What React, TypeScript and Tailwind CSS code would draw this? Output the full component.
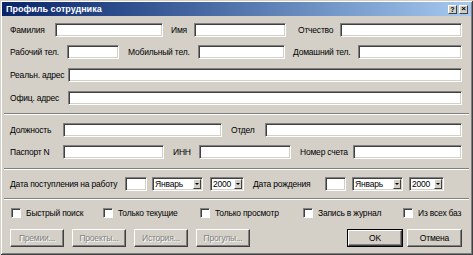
import React from "react";

const FONT = { fontFamily: '"Liberation Sans", Arial, sans-serif' };

// sunken edit box
const Field = ({ w }: { w: string }) => (
  <div
    className={`h-[14px] shrink-0 bg-white border border-t-[#808080] border-l-[#808080] border-b-white border-r-white shadow-[inset_1px_1px_0_#404040,inset_-1px_-1px_0_#d4d0c8] ${w}`}
  />
);

const Label = ({ w, text, ml = "" }: { w: string; text: string; ml?: string }) => (
  <span className={`shrink-0 whitespace-nowrap text-[8.5px] tracking-[-0.2px] leading-none text-black ${w} ${ml}`}>
    {text}
  </span>
);

const Combo = ({ w, value, ml }: { w: string; value: string; ml: string }) => (
  <div
    className={`h-[14px] shrink-0 flex items-center bg-white border border-t-[#808080] border-l-[#808080] border-b-white border-r-white shadow-[inset_1px_1px_0_#404040,inset_-1px_-1px_0_#d4d0c8] pl-[2px] pr-[1px] ${w} ${ml}`}
  >
    <span className="flex-1 text-[8.5px] tracking-[-0.2px] leading-none text-black">{value}</span>
    <div className="w-[8px] h-[10px] flex items-center justify-center bg-[#d4d0c8] border border-t-white border-l-white border-b-[#404040] border-r-[#404040]">
      <div className="w-0 h-0 border-l-[2px] border-r-[2px] border-t-[2px] border-l-transparent border-r-transparent border-t-black" />
    </div>
  </div>
);

const Separator = () => (
  <div className="mx-[4px] h-[2px] border-t border-t-[#808080] border-b border-b-white" />
);

const Check = ({ label, w }: { label: string; w: string }) => (
  <div className={`flex items-center shrink-0 ${w}`}>
    <div className="w-[10px] h-[10px] bg-white border border-t-[#808080] border-l-[#808080] border-b-white border-r-white shadow-[inset_1px_1px_0_#404040]" />
    <span className="ml-[5px] text-[8.5px] tracking-[-0.2px] leading-none text-black whitespace-nowrap">{label}</span>
  </div>
);

const Button = ({ label, disabled, primary, w }: { label: string; disabled?: boolean; primary?: boolean; w: string }) => (
  <div className={`h-[18px] shrink-0 ${w} ${primary ? "border border-black" : ""}`}>
    <div className="h-full w-full flex items-center justify-center bg-[#d4d0c8] border border-t-white border-l-white border-b-[#404040] border-r-[#404040] shadow-[inset_-1px_-1px_0_#808080]">
      <span
        className={`text-[8.5px] tracking-[-0.2px] leading-none whitespace-nowrap ${disabled ? "text-[#808080] [text-shadow:1px_1px_0_#ffffff]" : "text-black"}`}
      >
        {label}
      </span>
    </div>
  </div>
);

export default function App() {
  return (
    <div
      style={FONT}
      className="w-[473px] h-[255px] flex flex-col bg-[#d4d0c8] shadow-[inset_1px_1px_0_#d4d0c8,inset_-1px_-1px_0_#404040,inset_2px_2px_0_#ffffff,inset_-2px_-2px_0_#808080] overflow-hidden"
    >
      {/* title bar */}
      <div className="mt-[2px] mx-[2px] h-[14px] flex items-center bg-gradient-to-r from-[#0a246a] to-[#a6caf0] pl-[4px] pr-[3px]">
        <span className="flex-1 text-[9px] font-bold text-white leading-none">Профиль сотрудника</span>
        <div className="w-[9px] h-[9px] flex items-center justify-center bg-[#d4d0c8] border border-t-white border-l-white border-b-[#404040] border-r-[#404040]">
          <span className="text-[7px] font-bold leading-none text-black">?</span>
        </div>
        <div className="ml-[2px] w-[9px] h-[9px] flex items-center justify-center bg-[#d4d0c8] border border-t-white border-l-white border-b-[#404040] border-r-[#404040]">
          <span className="text-[8px] font-bold leading-none text-black">×</span>
        </div>
      </div>

      {/* names */}
      <div className="mt-[7px] h-[14px] flex items-center pl-[10px]">
        <Label w="w-[45px]" text="Фамилия" />
        <Field w="w-[108px]" />
        <Label w="w-[23px]" ml="ml-[8px]" text="Имя" />
        <Field w="w-[92px]" />
        <Label w="w-[42px]" ml="ml-[12px]" text="Отчество" />
        <Field w="w-[122px]" />
      </div>

      {/* phones */}
      <div className="mt-[8px] h-[14px] flex items-center pl-[10px]">
        <Label w="w-[57px]" text="Рабочий тел." />
        <Field w="w-[52px]" />
        <Label w="w-[70px]" ml="ml-[9px]" text="Мобильный тел." />
        <Field w="w-[87px]" />
        <Label w="w-[65px]" ml="ml-[8px]" text="Домашний тел." />
        <Field w="w-[104px]" />
      </div>

      {/* addresses */}
      <div className="mt-[9px] h-[14px] flex items-center pl-[10px]">
        <Label w="w-[58px]" text="Реальн. адрес" />
        <Field w="w-[394px]" />
      </div>
      <div className="mt-[9px] h-[14px] flex items-center pl-[10px]">
        <Label w="w-[58px]" text="Офиц. адрес" />
        <Field w="w-[394px]" />
      </div>

      <div className="mt-[8px]">
        <Separator />
      </div>

      {/* job */}
      <div className="mt-[8px] h-[14px] flex items-center pl-[10px]">
        <Label w="w-[53px]" text="Должность" />
        <Field w="w-[159px]" />
        <Label w="w-[34px]" ml="ml-[9px]" text="Отдел" />
        <Field w="w-[197px]" />
      </div>
      <div className="mt-[8px] h-[14px] flex items-center pl-[10px]">
        <Label w="w-[53px]" text="Паспорт N" />
        <Field w="w-[101px]" />
        <Label w="w-[26px]" ml="ml-[9px]" text="ИНН" />
        <Field w="w-[92px]" />
        <Label w="w-[53px]" ml="ml-[9px]" text="Номер счета" />
        <Field w="w-[109px]" />
      </div>

      <div className="mt-[9px]">
        <Separator />
      </div>

      {/* dates */}
      <div className="mt-[7px] h-[14px] flex items-center pl-[10px]">
        <Label w="w-[115px]" text="Дата поступления на работу" />
        <Field w="w-[22px]" />
        <Combo w="w-[51px]" ml="ml-[5px]" value="Январь" />
        <Combo w="w-[34px]" ml="ml-[7px]" value="2000" />
        <Label w="w-[72px]" ml="ml-[9px]" text="Дата рождения" />
        <Field w="w-[21px]" />
        <Combo w="w-[51px]" ml="ml-[6px]" value="Январь" />
        <Combo w="w-[35px]" ml="ml-[6px]" value="2000" />
      </div>

      <div className="mt-[7px]">
        <Separator />
      </div>

      {/* options */}
      <div className="mt-[8px] h-[10px] flex items-center pl-[11px]">
        <Check w="w-[92px]" label="Быстрый поиск" />
        <Check w="w-[97px]" label="Только текущие" />
        <Check w="w-[103px]" label="Только просмотр" />
        <Check w="w-[100px]" label="Запись в журнал" />
        <Check w="w-[60px]" label="Из всех баз" />
      </div>

      {/* buttons */}
      <div className="mt-[11px] flex items-center pl-[10px] pr-[11px] gap-[8px]">
        <Button w="w-[54px]" label="Премии..." disabled />
        <Button w="w-[54px]" label="Проекты..." disabled />
        <Button w="w-[54px]" label="История..." disabled />
        <Button w="w-[54px]" label="Прогулы..." disabled />
        <div className="flex-1" />
        <Button w="w-[56px]" label="OK" primary />
        <div className="-ml-[4px]">
          <Button w="w-[55px]" label="Отмена" />
        </div>
      </div>
    </div>
  );
}
